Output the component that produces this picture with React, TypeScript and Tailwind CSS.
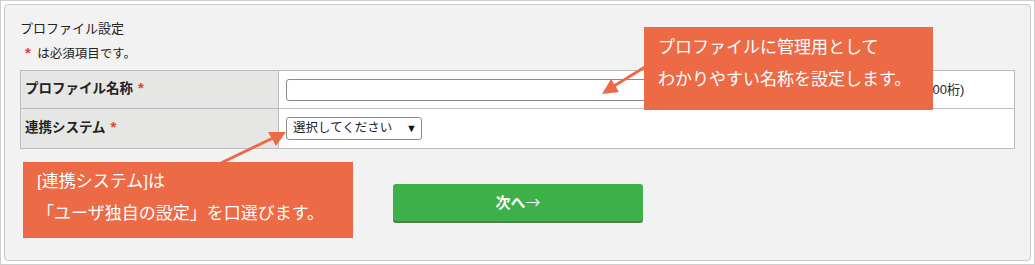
const font = { fontFamily: '"Liberation Sans", "Noto Sans CJK JP", sans-serif' };
const cjk = { fontFamily: '"Noto Sans CJK JP", sans-serif' };

function Asterisk() {
  return <span className="text-[#e2432e] font-bold text-[15px] leading-none">*</span>;
}

export default function App() {
  return (
    <div
      className="relative w-[1035px] h-[265px] bg-white border border-[#cfcfcf] p-[3px] text-[#222]"
      style={font}
    >
      <div className="h-full rounded-[4px] border border-[#c8c8c8] bg-[#f2f2f2] pl-[15px] pr-[14px] pt-[14px]">
        <div className="text-[13px] leading-[20px]">プロファイル設定</div>
        <div className="mt-[5px] pl-[5px] text-[12.5px] leading-[20px]">
          <Asterisk /> <span className="ml-[3px]">は必須項目です。</span>
        </div>

        {/* form table */}
        <div className="mt-[6px] w-[995px] border-t border-x border-[#bcbcbc]">
          <div className="flex h-[38px] border-b border-[#bcbcbc]">
            <div className="w-[258px] shrink-0 border-r border-[#bcbcbc] bg-[#e6e7e4] pl-[4px] flex items-center text-[13.5px] font-bold">
              プロファイル名称 <span className="ml-[5px]"><Asterisk /></span>
            </div>
            <div className="flex-1 bg-white pl-[7px] flex items-center">
              <div className="w-[600px] h-[22px] rounded-[3px] border border-[#8a8a8a] bg-white" />
              <span className="ml-[9px] text-[13px]">(全角100桁)</span>
            </div>
          </div>
          <div className="flex h-[40px] border-b border-[#bcbcbc]">
            <div className="w-[258px] shrink-0 border-r border-[#bcbcbc] bg-[#e6e7e4] pl-[4px] flex items-center text-[13.5px] font-bold">
              連携システム <span className="ml-[5px]"><Asterisk /></span>
            </div>
            <div className="flex-1 bg-white pl-[7px] flex items-center">
              <div className="w-[136px] h-[23px] rounded-[3px] border border-[#8a8a8a] bg-white flex items-center pl-[6px] pr-[4px] text-[12.5px]">
                <span>選択してください</span>
                <span className="ml-auto text-[11px] leading-none text-[#111]">▼</span>
              </div>
            </div>
          </div>
        </div>

        <div className="mt-[35px] flex justify-center">
          <button
            className="w-[250px] h-[37px] rounded-[3px] bg-[#3db049] text-white font-bold text-[15px] shadow-[0_2px_0_#56784b]"
            style={cjk}
          >
            次へ<span className="font-normal">→</span>
          </button>
        </div>
      </div>

      {/* callouts */}
      <div className="absolute left-[643px] top-[26px] w-[289px] h-[83px] bg-[#ec6a45] text-white text-[17px] leading-[32px] pl-[14px] pt-[5px]">
        <div>プロファイルに管理用として</div>
        <div>わかりやすい名称を設定します。</div>
      </div>
      <div className="absolute left-[22px] top-[161px] w-[330px] h-[76px] bg-[#ec6a45] text-white text-[17px] leading-[32px] pl-[14px] pt-[4px]">
        <div>[連携システム]は</div>
        <div>「ユーザ独自の設定」を口選びます。</div>
      </div>

      {/* arrows */}
      <svg className="absolute inset-0 pointer-events-none" width="1035" height="265">
        <line x1="644" y1="66" x2="613" y2="85" stroke="#ec6a45" strokeWidth="3" />
        <polygon points="601,93 610,78 618,91" fill="#ec6a45" />
        <line x1="220" y1="162" x2="272" y2="137" stroke="#ec6a45" strokeWidth="3" />
        <polygon points="285,131 267,131 275,145" fill="#ec6a45" />
      </svg>
    </div>
  );
}
